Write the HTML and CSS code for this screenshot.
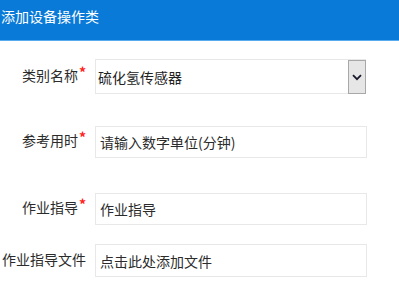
FILE: index.html
```html
<!DOCTYPE html>
<html lang="zh-CN">
<head>
    <meta charset="UTF-8">
    <meta name="viewport" content="width=device-width, initial-scale=1.0">
    <title>添加设备操作类</title>
    <link rel="stylesheet" href="styles.css">
</head>
<body>

    <div class="title-bar">添加设备操作类</div>

    <form class="form">
        <div class="row row-type">
            <label class="label">类别名称<span class="req">*</span></label>
            <div class="select-wrap">
                <select class="field select">
                    <option>硫化氢传感器</option>
                </select>
                <span class="select-btn">
                    <svg width="10" height="7" viewBox="0 0 10 7">
                        <path d="M1 1.2 L5 5.2 L9 1.2" fill="none" stroke="#1a1a2e" stroke-width="1.8"/>
                    </svg>
                </span>
            </div>
        </div>

        <div class="row row-time">
            <label class="label">参考用时<span class="req">*</span></label>
            <input class="field input" type="text" placeholder="请输入数字单位(分钟)">
        </div>

        <div class="row row-guide">
            <label class="label">作业指导<span class="req">*</span></label>
            <input class="field input" type="text" placeholder="作业指导">
        </div>

        <div class="row row-file">
            <label class="label">作业指导文件</label>
            <input class="field input input-file" type="text" placeholder="点击此处添加文件">
        </div>
    </form>

</body>
</html>
```

FILE: styles.css
```css
body {
    margin: 0;
    background-color: #fff;
    font-family: "Noto Sans CJK SC", "Noto Sans", sans-serif;
    font-size: 14px;
    color: #333;
}

.title-bar {
    height: 40px;
    line-height: 32px;
    padding-left: 1px;
    background-color: #0a7ad8;
    border-bottom: 1px solid #5aaaf0;
    color: #fff;
    font-size: 14px;
}

.form {
    padding-top: 18px;
}

.row {
    display: flex;
    align-items: center;
}

.row-type {
    margin-bottom: 32px;
}

.row-time {
    margin-bottom: 35px;
}

.row-guide {
    margin-bottom: 19px;
}

.label {
    width: 86px;
    margin-right: 9px;
    margin-top: -4px;
    text-align: right;
    white-space: nowrap;
    color: #2b2b2b;
}

.req {
    color: #f22;
    font-size: 14px;
    font-weight: bold;
    line-height: 1;
    vertical-align: top;
    margin-left: 1px;
}

.field {
    box-sizing: border-box;
    border: 1px solid #e8e8e8;
    font-family: inherit;
    font-size: 14px;
    color: #2b2b2b;
    background-color: #fff;
    outline: none;
}

.select-wrap {
    position: relative;
    width: 271px;
    height: 35px;
}

.select {
    appearance: none;
    -webkit-appearance: none;
    width: 100%;
    height: 100%;
    padding: 0 0 0 2px;
    color: #222;
    border-radius: 0;
}

/* 右側の▼ボタン */
.select-btn {
    position: absolute;
    top: 1px;
    right: 0;
    width: 18px;
    height: 34px;
    box-sizing: border-box;
    background-color: #e6e6e6;
    border: 1px solid #a8a8a8;
    display: flex;
    align-items: center;
    justify-content: center;
}

.input {
    width: 272px;
    height: 32px;
    padding: 0 0 0 4px;
}

.input-file {
    height: 33px;
}

.input::placeholder {
    color: #2b2b2b;
    opacity: 1;
}
```
